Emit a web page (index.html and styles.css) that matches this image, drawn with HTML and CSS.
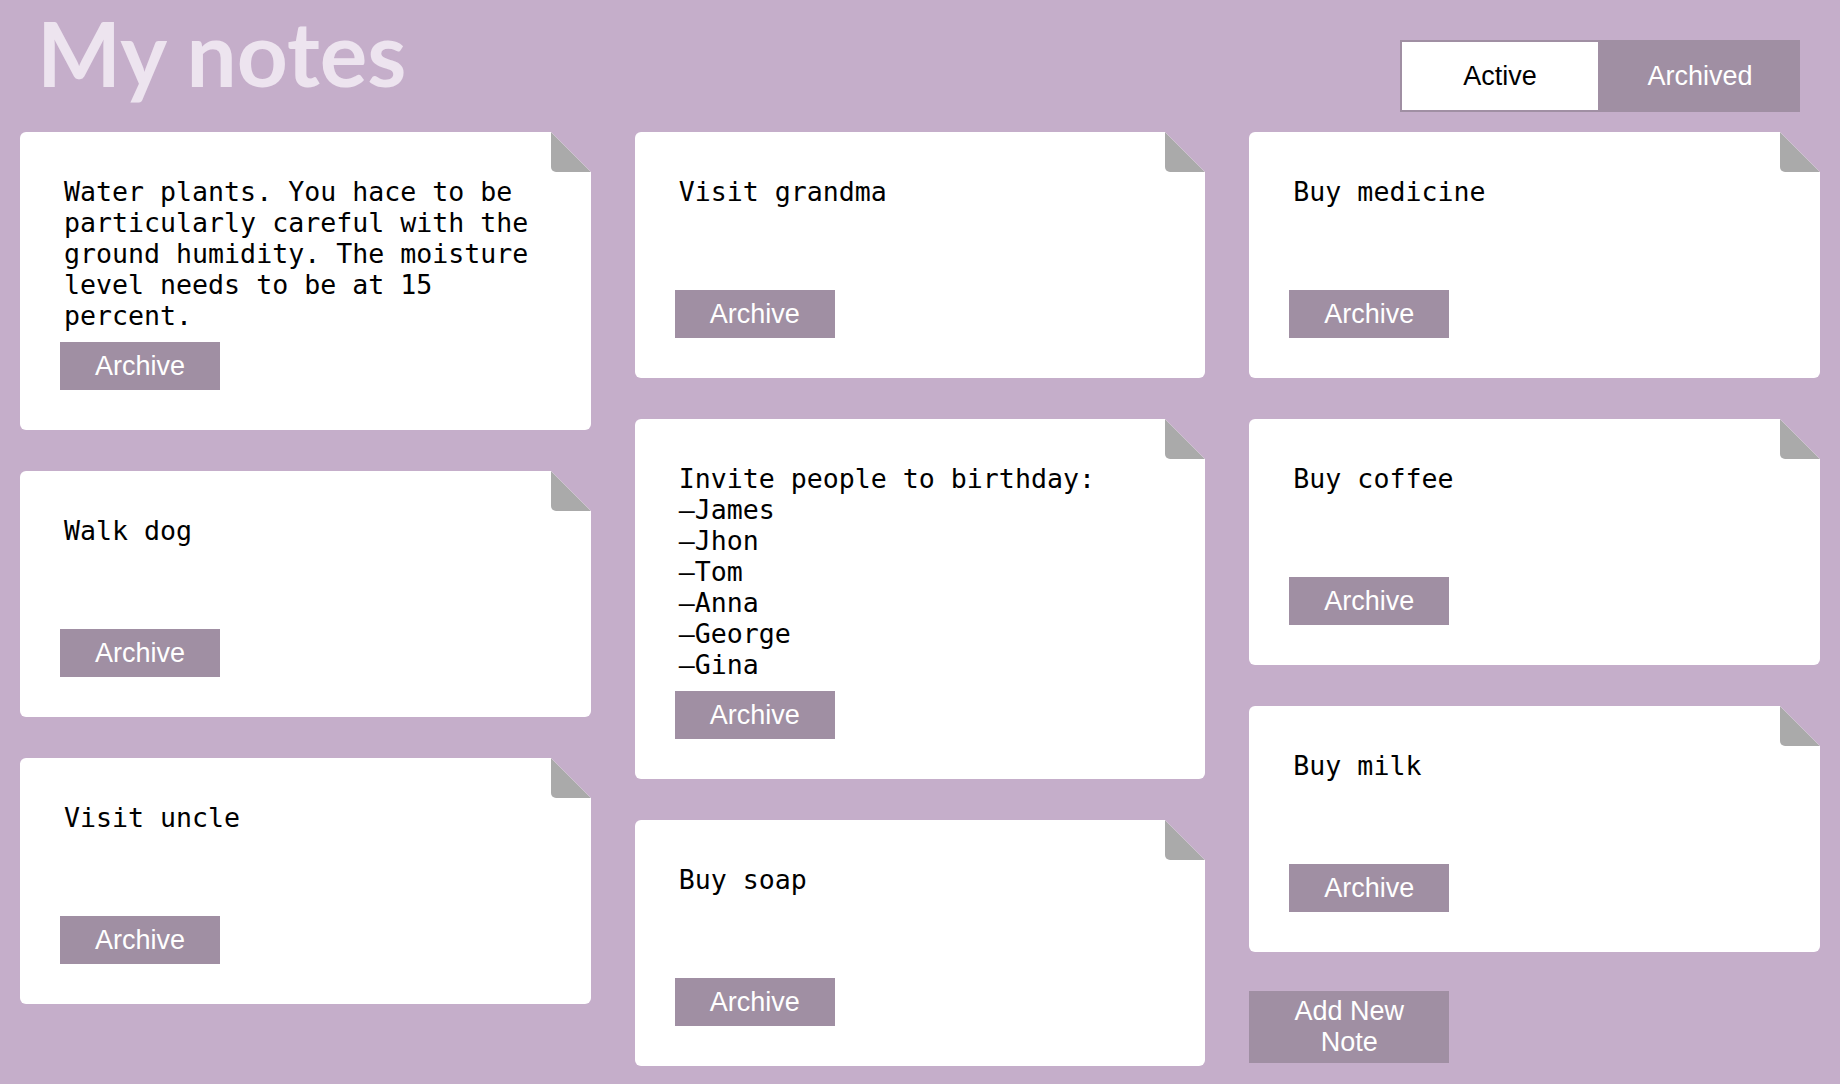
FILE: index.html
```html
<!DOCTYPE html>
<html lang="en">

<head>
    <meta charset="UTF-8">
    <meta name="viewport" content="width=device-width, initial-scale=1.0">
    <title>My notes</title>
    <link rel="stylesheet" href="styles.css">
</head>

<body>
    <div class="header">
        <h1>My notes</h1>
        <div class="tabs">
            <button class="tab tab-active">Active</button>
            <button class="tab">Archived</button>
        </div>
    </div>

    <div class="board">
        <div class="column">
            <div class="note">
                <p class="note-text">Water plants. You hace to be particularly careful with the ground humidity. The moisture level needs to be at 15 percent.</p>
                <button class="archive-btn">Archive</button>
            </div>
            <div class="note">
                <p class="note-text">Walk dog</p>
                <button class="archive-btn">Archive</button>
            </div>
            <div class="note">
                <p class="note-text">Visit uncle</p>
                <button class="archive-btn">Archive</button>
            </div>
        </div>

        <div class="column">
            <div class="note">
                <p class="note-text">Visit grandma</p>
                <button class="archive-btn">Archive</button>
            </div>
            <div class="note">
                <p class="note-text">Invite people to birthday:<br>–James<br>–Jhon<br>–Tom<br>–Anna<br>–George<br>–Gina</p>
                <button class="archive-btn">Archive</button>
            </div>
            <div class="note">
                <p class="note-text">Buy soap</p>
                <button class="archive-btn">Archive</button>
            </div>
        </div>

        <div class="column">
            <div class="note">
                <p class="note-text">Buy medicine</p>
                <button class="archive-btn">Archive</button>
            </div>
            <div class="note">
                <p class="note-text">Buy coffee</p>
                <button class="archive-btn">Archive</button>
            </div>
            <div class="note">
                <p class="note-text">Buy milk</p>
                <button class="archive-btn">Archive</button>
            </div>
            <button class="add-btn">Add New Note</button>
        </div>
    </div>
</body>

</html>
```

FILE: styles.css
```css
body {
    margin: 0;
    background-color: #c5aeca;
    font-family: "Liberation Sans", Arial, sans-serif;
}

.header {
    display: flex;
    justify-content: space-between;
    align-items: flex-start;
    padding: 0 40px 0 37px;
}

h1 {
    margin: 0;
    font-family: Lato, sans-serif;
    font-weight: 700;
    font-size: 89px;
    line-height: 106px;
    color: #ede4ef;
}

.tabs {
    display: flex;
    margin-top: 40px;
}

.tab {
    width: 200px;
    height: 72px;
    padding: 0;
    border: 2px solid #a08fa3;
    background-color: #a08fa3;
    color: #fff;
    font-family: "Liberation Sans", Arial, sans-serif;
    font-size: 27px;
    cursor: pointer;
}

.tab-active {
    background-color: #fff;
    color: #000;
}

.board {
    display: grid;
    grid-template-columns: repeat(3, 1fr);
    gap: 44px;
    padding: 20px 20px 0;
}

.column {
    display: flex;
    flex-direction: column;
    gap: 41px;
}

.note {
    position: relative;
    background-color: #fff;
    border-radius: 6px;
    padding: 44px 44px 40px 40px;
}

/* folded corner */
.note::before {
    content: "";
    position: absolute;
    top: 0;
    right: 0;
    border-style: solid;
    border-width: 0 40px 40px 0;
    border-color: transparent #c5aeca #aaa transparent;
    border-bottom-left-radius: 5px;
}

.note-text {
    margin: 0 0 11px;
    padding-left: 4px;
    min-height: 103px;
    font-family: "DejaVu Sans Mono", monospace;
    font-size: 26.6px;
    line-height: 31px;
    color: #000;
}

.archive-btn {
    display: block;
    width: 160px;
    height: 48px;
    padding: 0;
    border: none;
    background-color: #a08fa3;
    color: #fff;
    font-family: "Liberation Sans", Arial, sans-serif;
    font-size: 27px;
    cursor: pointer;
}

.add-btn {
    align-self: flex-start;
    width: 200px;
    height: 72px;
    margin-top: -2px;
    padding: 0 20px;
    border: none;
    background-color: #a08fa3;
    color: #fff;
    font-family: "Liberation Sans", Arial, sans-serif;
    font-size: 27px;
    line-height: 31px;
    cursor: pointer;
}
```
